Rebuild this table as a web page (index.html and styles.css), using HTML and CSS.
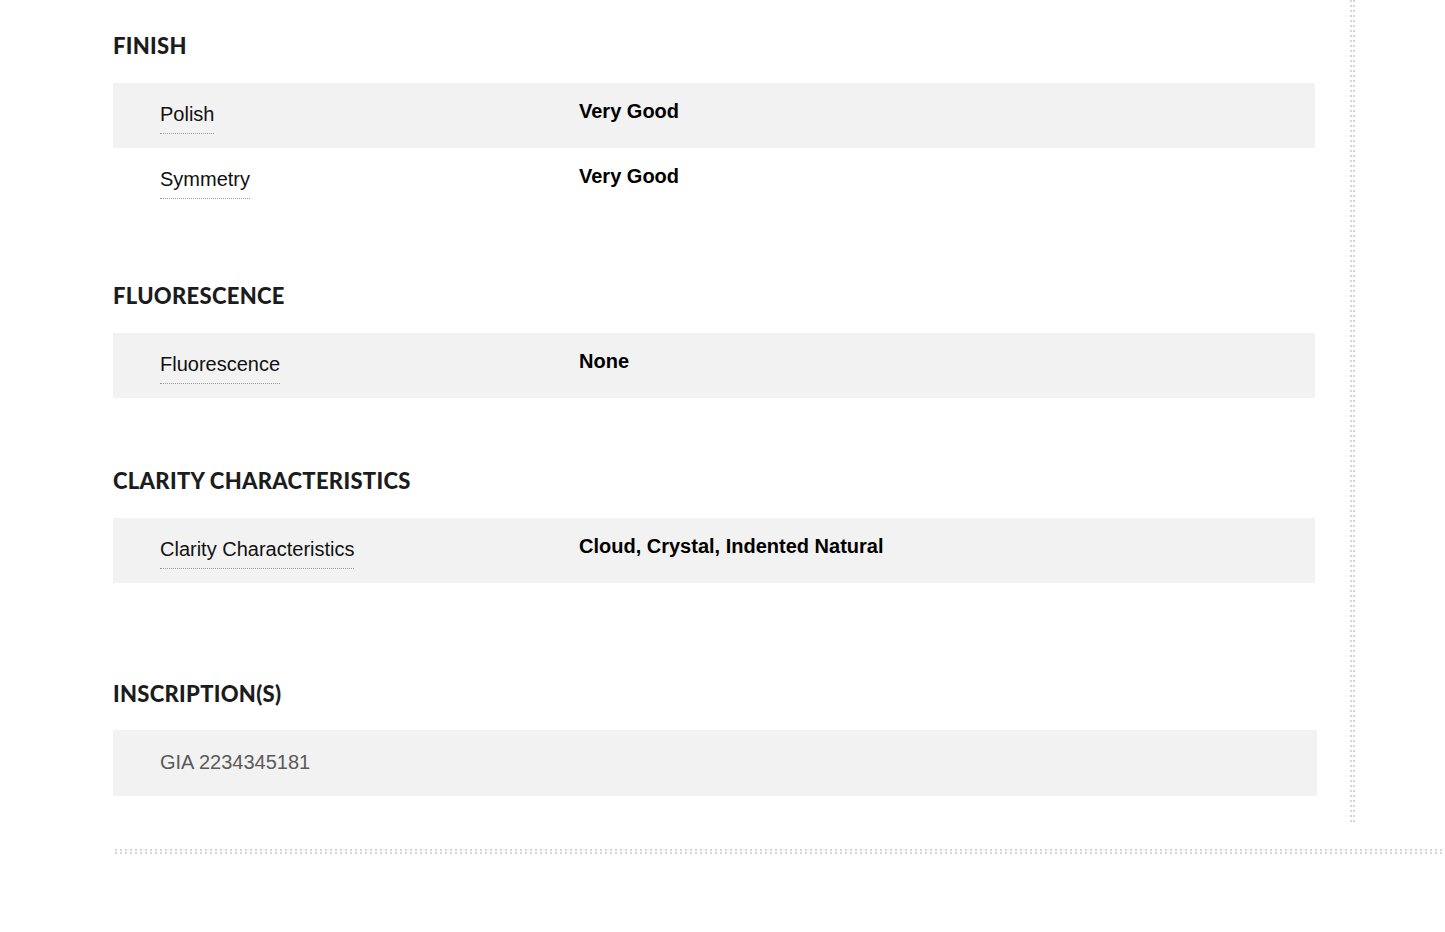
FILE: index.html
```html
<!DOCTYPE html>
<html lang="en">
<head>
<meta charset="utf-8">
<title>Grading details</title>
<link rel="stylesheet" href="styles.css">
</head>
<body>
<div class="page">
  <div class="top">
    <div class="sections">
      <section class="section first">
        <h2 class="heading">FINISH</h2>
        <div class="row shaded">
          <div class="label"><span class="term">Polish</span></div>
          <div class="value">Very Good</div>
        </div>
        <div class="row">
          <div class="label"><span class="term">Symmetry</span></div>
          <div class="value">Very Good</div>
        </div>
      </section>
      <section class="section">
        <h2 class="heading">FLUORESCENCE</h2>
        <div class="row shaded">
          <div class="label"><span class="term">Fluorescence</span></div>
          <div class="value">None</div>
        </div>
      </section>
      <section class="section">
        <h2 class="heading">CLARITY CHARACTERISTICS</h2>
        <div class="row shaded">
          <div class="label"><span class="term">Clarity Characteristics</span></div>
          <div class="value">Cloud, Crystal, Indented Natural</div>
        </div>
      </section>
      <section class="section wide-gap">
        <h2 class="heading">INSCRIPTION(S)</h2>
        <div class="inscription">GIA 2234345181</div>
      </section>
    </div>
    <div class="vline"></div>
  </div>
  <div class="hline"></div>
</div>
</body>
</html>
```

FILE: styles.css
```css
html, body {
  margin: 0;
  padding: 0;
  background: #fff;
}

body {
  font-family: "Liberation Sans", Arial, sans-serif;
  color: #111;
}

.page {
  width: 1445px;
  overflow: hidden;
}

.top {
  display: flex;
  align-items: stretch;
  padding-left: 113px;
  height: 822px;
}

.sections {
  width: 1204px;
}

.section {
  margin-top: 70px;
}

.section.first {
  margin-top: 33px;
}

.section.wide-gap {
  margin-top: 98px;
}

.heading {
  margin: 0 0 24px 0;
  font-family: Lato, "Open Sans", sans-serif;
  font-weight: 900;
  font-size: 22px;
  line-height: 26px;
  color: #1c1c1c;
  letter-spacing: 0.3px;
}

.wide-gap .heading {
  margin-bottom: 23px;
}

.row {
  display: grid;
  grid-template-columns: 419px 1fr;
  width: 1202px;
  height: 65px;
  padding-left: 47px;
  box-sizing: border-box;
  align-items: start;
}

.row.shaded {
  background: #f2f2f2;
}

.label {
  padding-top: 20px;
  font-size: 20px;
  line-height: 23px;
}

.term {
  display: inline-block;
  padding-bottom: 7px;
  border-bottom: 1px dotted #9a9a9a;
  color: #111;
}

.value {
  padding-top: 17px;
  font-size: 20px;
  line-height: 23px;
  font-weight: 700;
  color: #000;
}

.inscription {
  width: 1204px;
  height: 66px;
  box-sizing: border-box;
  padding: 21px 0 0 47px;
  background: #f2f2f2;
  font-size: 20px;
  line-height: 23px;
  color: #5a5a5a;
}

.vline {
  margin-left: 33px;
  width: 5px;
  flex: none;
  background-image:
    linear-gradient(to bottom, transparent 2px, #fff 2px),
    linear-gradient(to right, #d6d6d6 2px, #fff 2px, #fff 3px, #d6d6d6 3px);
  background-size: 5px 5px, 5px 5px;
}

.hline {
  margin-top: 27px;
  margin-left: 115px;
  height: 5px;
  background-image:
    linear-gradient(to right, transparent 2px, #fff 2px),
    linear-gradient(to bottom, #d6d6d6 2px, #fff 2px, #fff 3px, #d6d6d6 3px);
  background-size: 5px 5px, 5px 5px;
}
```
